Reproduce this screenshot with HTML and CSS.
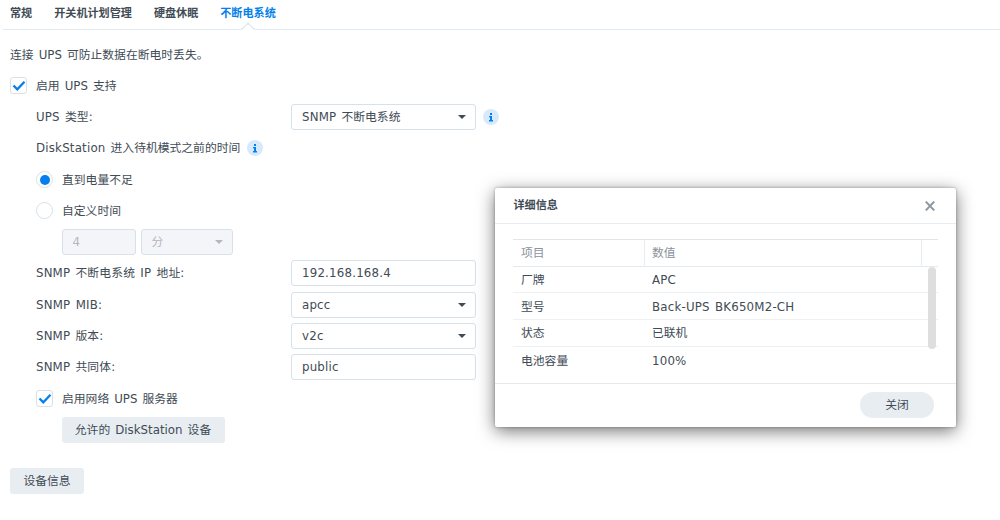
FILE: index.html
```html
<!DOCTYPE html>
<html lang="zh-CN">
<head>
    <meta charset="UTF-8">
    <meta name="viewport" content="width=device-width, initial-scale=1.0">
    <title>不断电系统</title>
    <link rel="stylesheet" href="styles.css">
</head>
<body>
    <nav class="tabs">
        <a class="tab">常规</a>
        <a class="tab">开关机计划管理</a>
        <a class="tab">硬盘休眠</a>
        <a class="tab active">不断电系统
            <svg class="notch" width="14" height="8" viewBox="0 0 14 8"><path d="M0 8V7L2 6.5L7 1L12 6.5L14 7V8Z" fill="#fff"/><path d="M0 6.8H1.5L7 1L12.5 6.8H14" fill="none" stroke="#e2eaf1" stroke-width="1.5"/></svg>
        </a>
    </nav>

    <main class="form">
        <div class="row">连接 UPS 可防止数据在断电时丢失。</div>
        <div class="row">
            <span class="checkbox"><svg width="14" height="12" viewBox="0 0 14 12"><path d="M1.5 5.5L5.3 9.3L12.5 1.8" fill="none" stroke="#057feb" stroke-width="2.3"/></svg></span>
            <span>启用 UPS 支持</span>
        </div>
        <div class="row indent">
            <span class="label">UPS 类型:</span>
            <div class="field select"><span class="latin">SNMP</span> 不断电系统</div>
            <span class="info"><svg width="6" height="9" viewBox="0 0 6 9"><path d="M2 0H4V2H2ZM1 3H4V7H5V8.5H1V7H2V4.3H1Z" fill="#057feb"/></svg></span>
        </div>
        <div class="row indent">
            <span><span class="latin">DiskStation</span> 进入待机模式之前的时间</span>
            <span class="info"><svg width="6" height="9" viewBox="0 0 6 9"><path d="M2 0H4V2H2ZM1 3H4V7H5V8.5H1V7H2V4.3H1Z" fill="#057feb"/></svg></span>
        </div>
        <div class="row indent">
            <span class="radio checked"></span>
            <span>直到电量不足</span>
        </div>
        <div class="row indent">
            <span class="radio"></span>
            <span>自定义时间</span>
        </div>
        <div class="row indent-2">
            <div class="field small disabled">4</div>
            <div class="field medium select disabled">分</div>
        </div>
        <div class="row indent">
            <span class="label">SNMP 不断电系统 IP 地址:</span>
            <div class="field latin">192.168.168.4</div>
        </div>
        <div class="row indent">
            <span class="label latin">SNMP MIB:</span>
            <div class="field select latin">apcc</div>
        </div>
        <div class="row indent">
            <span class="label">SNMP 版本:</span>
            <div class="field select latin">v2c</div>
        </div>
        <div class="row indent">
            <span class="label">SNMP 共同体:</span>
            <div class="field latin">public</div>
        </div>
        <div class="row indent">
            <span class="checkbox"><svg width="14" height="12" viewBox="0 0 14 12"><path d="M1.5 5.5L5.3 9.3L12.5 1.8" fill="none" stroke="#057feb" stroke-width="2.3"/></svg></span>
            <span>启用网络 UPS 服务器</span>
        </div>
        <div class="row indent-2">
            <button class="btn btn-wide">允许的 DiskStation 设备</button>
        </div>
        <button class="btn btn-info">设备信息</button>
    </main>

    <div class="dialog">
        <div class="dialog-header">
            <span>详细信息</span>
            <svg width="10" height="10" viewBox="0 0 10 10"><path d="M0.8 0.6L9.2 9.4M9.2 0.6L0.8 9.4" stroke="#8f989f" stroke-width="2"/></svg>
        </div>
        <div class="dialog-body">
            <div class="line head"><span>项目</span><span>数值</span><span></span></div>
            <div class="line"><span>厂牌</span><span class="latin">APC</span></div>
            <div class="line"><span>型号</span><span class="latin">Back-UPS BK650M2-CH</span></div>
            <div class="line"><span>状态</span><span>已联机</span></div>
            <div class="line"><span>电池容量</span><span class="latin">100%</span></div>
            <div class="scrollbar"></div>
        </div>
        <div class="dialog-footer">
            <button class="btn btn-round">关闭</button>
        </div>
    </div>
</body>
</html>
```
FILE: styles.css
```css
* {
    box-sizing: border-box;
}
body {
    margin: 0;
    height: 520px;
    overflow: hidden;
    background: #fff;
    color: #414b55;
    font-family: "DejaVu Sans", "Noto Sans CJK SC", sans-serif;
    font-size: 11.8px;
    line-height: 16px;
    white-space: nowrap;
    word-spacing: 1.3px;
}
.tabs {
    display: flex;
    gap: 22px;
    height: 30px;
    margin-left: 3px;
    padding: 6px 0 0 7px;
    border-bottom: 1.5px solid #e2eaf1;
    font-size: 11.1px;
    font-weight: bold;
}
.tab {
    position: relative;
}
.tab.active {
    color: #057feb;
}
.notch {
    position: absolute;
    left: 50%;
    bottom: -1px;
    margin-left: -7px;
}
.form {
    padding: 9px 10px 0;
}
.row {
    display: flex;
    align-items: center;
    height: 31.27px;
}
.indent {
    padding-left: 26px;
}
.indent-2 {
    padding-left: 51.5px;
}
.label {
    width: 255px;
    letter-spacing: 0.15px;
}
.latin {
    letter-spacing: 0.2px;
}
.field {
    position: relative;
    width: 184.5px;
    height: 26px;
    padding: 0 10px;
    border: 1px solid #d7e1e9;
    border-radius: 3px;
    line-height: 25px;
}
.field.small {
    width: 74px;
    margin-right: 5px;
}
.field.medium {
    width: 92.5px;
}
.field.disabled {
    background: #f4f5f9;
    color: #b1b7bd;
}
.select::after {
    content: "";
    position: absolute;
    right: 9px;
    top: 10px;
    border: 4px solid transparent;
    border-top-color: #414b55;
    border-bottom: 0;
}
.select.disabled::after {
    border-top-color: #b1b7bd;
}
.info {
    display: flex;
    align-items: center;
    justify-content: center;
    width: 16px;
    height: 16px;
    margin-left: 7px;
    border-radius: 50%;
    background: #d7eafb;
}
.checkbox,
.radio {
    display: flex;
    align-items: center;
    justify-content: center;
    width: 17px;
    height: 17px;
    margin-right: 9px;
    border: 1px solid #d7e1e9;
    border-radius: 3px;
}
.radio {
    border-radius: 50%;
}
.radio.checked::after {
    content: "";
    width: 10px;
    height: 10px;
    border-radius: 50%;
    background: #057feb;
}
.btn {
    height: 26px;
    padding: 0;
    border: 0;
    border-radius: 3px;
    background: #e8edf2;
    color: #414b55;
    font: inherit;
    word-spacing: inherit;
}
.btn-wide {
    width: 163px;
}
.btn-info {
    display: block;
    width: 74px;
    margin-top: 22.5px;
}
.btn-round {
    width: 74px;
    border-radius: 13px;
}
.dialog {
    position: absolute;
    left: 495px;
    top: 188px;
    width: 461px;
    height: 239px;
    border-radius: 2px;
    background: #fff;
    box-shadow: 0 4px 17px rgba(0, 0, 0, 0.55), 0 0 3px rgba(0, 0, 0, 0.3);
}
.dialog-header {
    display: flex;
    align-items: center;
    justify-content: space-between;
    height: 36px;
    padding: 1px 21px 0 18.5px;
    border-bottom: 1px solid #e6edf3;
    font-size: 11.1px;
    font-weight: bold;
}
.dialog-body {
    position: relative;
    height: 160px;
    padding: 15px 18px 0;
    border-bottom: 1px solid #e3eaee;
}
.line {
    display: grid;
    grid-template-columns: 131px 277px 1fr;
    align-items: center;
    height: 26.8px;
    padding-top: 1px;
    border-bottom: 1px solid #edf1f4;
}
.line:nth-child(5) {
    border-bottom: 0;
}
.line span {
    padding-left: 8px;
}
.line.head {
    height: 27.5px;
    padding-top: 0;
    border-top: 1px solid #dfe7ed;
    border-bottom-color: #e3eaf0;
    color: #8b939b;
}
.head span {
    height: 100%;
    line-height: 27px;
}
.head span + span {
    border-left: 1px solid #e6edf3;
    padding-left: 7px;
}
.scrollbar {
    position: absolute;
    right: 20px;
    top: 43px;
    width: 8px;
    height: 82px;
    border-radius: 4px;
    background: #dedede;
}
.dialog-footer {
    display: flex;
    justify-content: flex-end;
    padding: 8px 22px 0;
}
```
